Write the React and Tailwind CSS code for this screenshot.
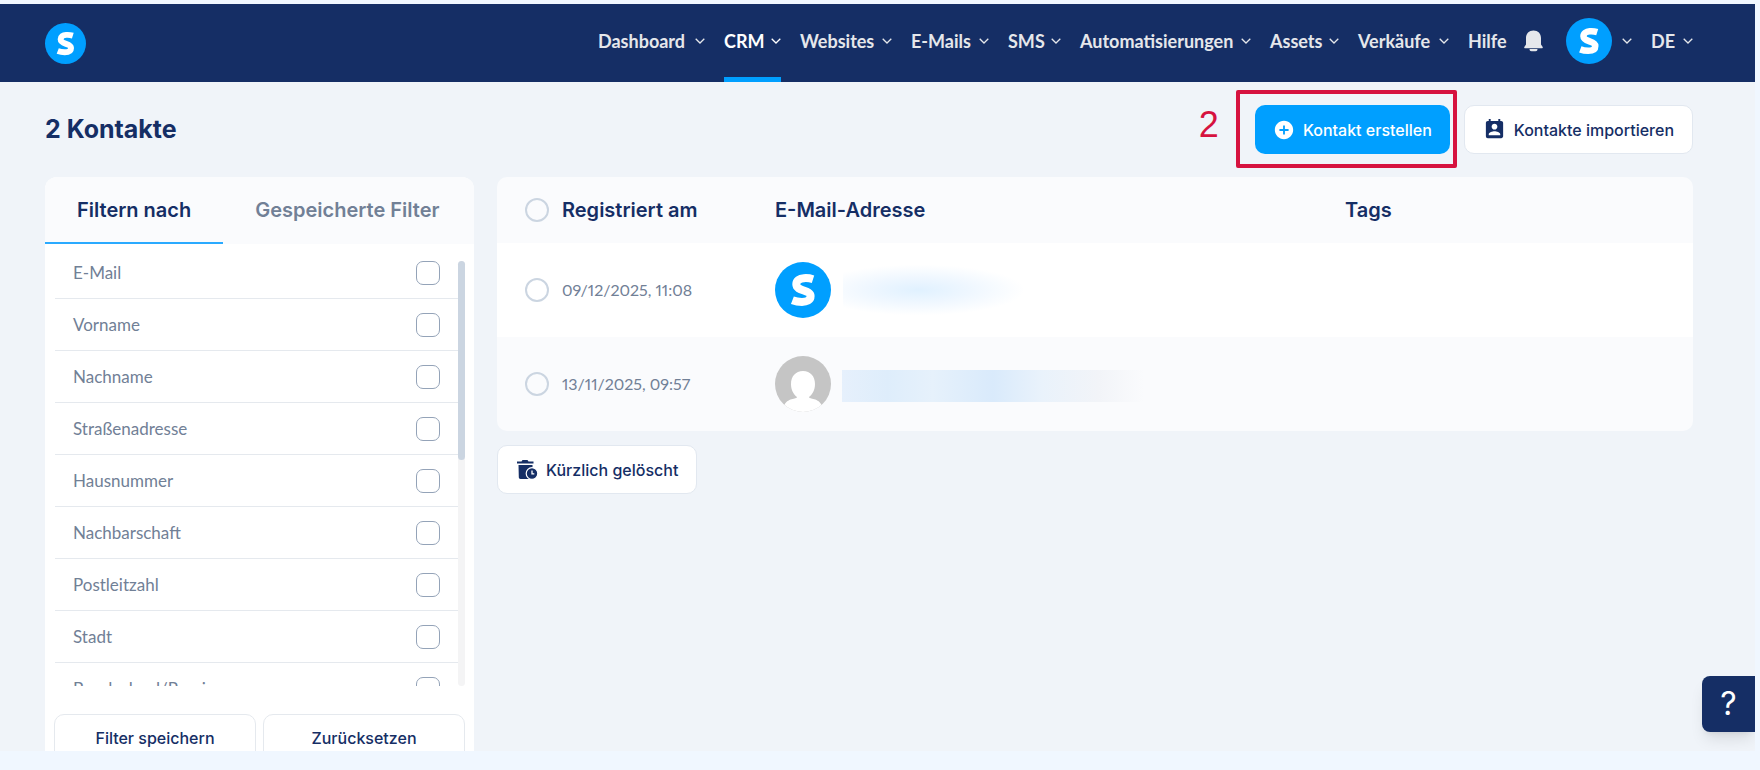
import React, { useState } from "react";
import { MdAddCircle, MdPermContactCalendar } from "react-icons/md";

const navItems = [
  { label: "Dashboard", width: "w-[107px]" },
  { label: "CRM", width: "w-[57px]", active: true },
  { label: "Websites", width: "w-[92px]" },
  { label: "E-Mails", width: "w-[78px]" },
  { label: "SMS", width: "w-[53px]" },
  { label: "Automatisierungen", width: "w-[171px]" },
  { label: "Assets", width: "w-[69px]" },
  { label: "Verkäufe", width: "w-[91px]" },
];

const filters = [
  "E-Mail",
  "Vorname",
  "Nachname",
  "Straßenadresse",
  "Hausnummer",
  "Nachbarschaft",
  "Postleitzahl",
  "Stadt",
  "Bundesland/Provinz",
];

const Chevron = () => (
  <svg viewBox="0 0 10 6" className="w-[10px] h-[6px] shrink-0" aria-hidden="true">
    <path d="M0.7 0.8 L5 5 L9.3 0.8" fill="none" stroke="currentColor" strokeWidth="1.3" />
  </svg>
);

const LogoMark = ({ className }) => (
  <svg viewBox="0 0 56 56" className={className} aria-hidden="true">
    <circle cx="28" cy="28" r="28" fill="#009fff" />
    <path
      d="M38 17.200 C34.500 16.100 31.500 16 28.800 16.200 C24.500 16.500 21.300 18.600 21.300 22.300 C21.300 29.500 35.600 27.500 35.600 34 C35.600 38.500 31.500 39.900 27 39.900 C23 39.900 20 39.200 17.400 38.200"
      fill="none"
      stroke="#fff"
      strokeWidth="8"
    />
  </svg>
);

const PersonAvatar = () => (
  <svg viewBox="0 0 56 56" className="w-14 h-14 shrink-0" aria-hidden="true">
    <defs>
      <clipPath id="avatarClip">
        <circle cx="28" cy="28" r="28" />
      </clipPath>
    </defs>
    <g clipPath="url(#avatarClip)">
      <rect width="56" height="56" fill="#c5c5c5" />
      <path
        d="M28 15 C20.500 15 16 20.500 16 28 C16 34 18.500 38.500 22 41 C22 43.500 12 41.500 9 50 L9 58 L47 58 L47 50 C44 41.500 34 43.500 34 41 C37.500 38.500 40 34 40 28 C40 20.500 35.500 15 28 15 Z"
        fill="#fff"
      />
    </g>
  </svg>
);

const TrashClock = () => (
  <svg viewBox="0 0 22 22" className="w-[22px] h-[22px]" aria-hidden="true">
    <path
      d="M1 2.500 H5.500 L6.500 1 H11.500 L12.500 2.500 H17.500 V4.500 H1 Z M2.500 6 H16.500 V20 H4.500 C3.400 20 2.900 19.300 2.800 18.300 Z"
      fill="currentColor"
    />
    <circle cx="16" cy="14.500" r="5.800" fill="currentColor" stroke="#fff" strokeWidth="1.200" />
    <path d="M16 11.500 V14.800 H18.300" fill="none" stroke="#fff" strokeWidth="1.300" />
  </svg>
);

const Header = () => (
  <header className="flex h-[78px] items-stretch justify-between bg-[#152e65] pl-[45px] pr-[62px] text-[#e5e7eb]">
    <a href="#home" aria-label="Startseite" className="flex items-center">
      <LogoMark className="w-[41px] h-[41px]" />
    </a>
    <nav className="flex gap-[19px] pb-1 font-['Lato',sans-serif] text-lg font-bold">
      {navItems.map((item) => (
        <button
          key={item.label}
          className={`relative flex items-center justify-between whitespace-nowrap ${item.width} ${
            item.active ? "text-white" : ""
          }`}
        >
          {item.label}
          <Chevron />
          {item.active && (
            <span className="absolute inset-x-0 -bottom-1 h-[5px] bg-[#009fff]" />
          )}
        </button>
      ))}
      <a href="#hilfe" className="flex items-center w-[37px]">
        Hilfe
      </a>
      <button aria-label="Benachrichtigungen" className="flex items-center">
        <svg viewBox="0 0 19 22" className="w-[19px] h-[22px]" aria-hidden="true">
          <path
            d="M9.500 0.500 C5 0.500 2 3.600 2 8 V14.500 L0.300 17 C0 17.600 0.300 18.200 0.800 18.200 H18.200 C18.700 18.200 19 17.600 18.700 17 L17 14.500 V8 C17 3.600 14 0.500 9.500 0.500 Z M5.500 18.900 H13.500 C13.500 20.800 12.500 21.300 9.500 21.300 C6.500 21.300 5.500 20.800 5.500 18.900 Z"
            fill="currentColor"
          />
        </svg>
      </button>
      <button aria-label="Konto" className="ml-1 flex items-center gap-[10px]">
        <LogoMark className="w-[46px] h-[46px]" />
        <Chevron />
      </button>
      <button className="flex w-[42px] items-center justify-between">
        DE
        <Chevron />
      </button>
    </nav>
  </header>
);

const FilterPanel = () => {
  const [tab, setTab] = useState(0);

  return (
    <aside className="w-[429px] shrink-0 overflow-hidden rounded-t-xl bg-white">
      <div className="flex h-[67px] bg-[#fafbfd] text-xl font-semibold">
        {["Filtern nach", "Gespeicherte Filter"].map((label, index) => (
          <button
            key={label}
            onClick={() => setTab(index)}
            className={`px-8 border-b-2 whitespace-nowrap ${
              index === tab
                ? "border-[#2aaaff] text-[#152e65]"
                : "border-transparent text-[#718096]"
            }`}
          >
            {label}
          </button>
        ))}
      </div>
      <div className="mt-[17px] ml-[10px] mr-[9px] flex h-[425px]">
        <ul className="flex-1 overflow-hidden">
          {filters.map((name) => (
            <li key={name} className="border-b border-[#e5e9ee] pt-[14px] pb-[13px] first:pt-0">
              <label className="flex h-6 items-center justify-between px-[18px] font-['Lato',sans-serif] text-[17px] text-[#718096]">
                {name}
                <input
                  type="checkbox"
                  className="h-6 w-6 appearance-none rounded-[7px] border border-[#94a3b8] bg-white"
                />
              </label>
            </li>
          ))}
        </ul>
        <div className="w-[7px] rounded-full bg-[#f4f4f5]">
          <div className="h-[199px] rounded-full bg-[#cbd5e1]" />
        </div>
      </div>
      <div className="mt-7 mx-[9px] grid grid-cols-2 gap-[7px]">
        {["Filter speichern", "Zurücksetzen"].map((label) => (
          <button
            key={label}
            className="h-12 rounded-[10px] border border-[#e5e9ee] text-base font-medium"
          >
            {label}
          </button>
        ))}
      </div>
    </aside>
  );
};

const RoundCheck = ({ label }) => (
  <input
    type="checkbox"
    aria-label={label}
    className="block h-6 w-6 appearance-none rounded-full border-2 border-[#cbd5e1]"
  />
);

const ContactTable = () => (
  <div className="overflow-hidden rounded-[10px]">
    <table className="w-full table-fixed text-left">
      <colgroup>
        <col className="w-[65px]" />
        <col className="w-[213px]" />
        <col className="w-[570px]" />
        <col />
      </colgroup>
      <thead>
        <tr className="h-[66px] bg-[#fafbfd] text-xl">
          <th className="pl-7">
            <RoundCheck label="Alle auswählen" />
          </th>
          <th className="font-semibold">Registriert am</th>
          <th className="font-semibold">E-Mail-Adresse</th>
          <th className="font-semibold">Tags</th>
        </tr>
      </thead>
      <tbody>
        <tr className="h-[94px] bg-white">
          <td className="pl-7">
            <RoundCheck label="Kontakt auswählen" />
          </td>
          <td className="font-['Lato',sans-serif] text-base proportional-nums text-[#718096]">
            09/12/2025, 11:08
          </td>
          <td>
            <div className="flex items-center gap-3">
              <LogoMark className="w-14 h-14 shrink-0" />
              <div className="h-[50px] w-[180px] bg-[radial-gradient(ellipse_at_42%_50%,#e0f1ff_0%,#eff7ff_35%,#fff_72%)]" />
            </div>
          </td>
          <td />
        </tr>
        <tr className="h-[94px] bg-[#fafbfd]">
          <td className="pl-7">
            <RoundCheck label="Kontakt auswählen" />
          </td>
          <td className="font-['Lato',sans-serif] text-base proportional-nums text-[#718096]">
            13/11/2025, 09:57
          </td>
          <td>
            <div className="flex items-center gap-[11px]">
              <PersonAvatar />
              <div className="mt-1 h-8 w-[302px] bg-[linear-gradient(90deg,#e6f0fc_0%,#deedfb_15%,#e6f1fb_30%,#d9eafb_50%,#e9f2fb_66%,#f2f4f8_85%,#fafbfd_100%)]" />
            </div>
          </td>
          <td />
        </tr>
      </tbody>
    </table>
  </div>
);

const App = () => {
  return (
    <div className="h-screen overflow-hidden bg-[#f0f7ff] pt-1 pr-[5px] pb-[19px] font-['Inter',sans-serif] text-[#152e65]">
      <div className="relative h-full overflow-hidden bg-[#f0f4f9]">
        <Header />
        <main className="pl-[45px] pr-[62px]">
          <div className="flex h-[95px] items-center justify-between">
            <h1 className="text-[25px] font-bold">2 Kontakte</h1>
            <div className="flex items-center gap-[14px]">
              <div className="relative">
                <button className="flex h-[49px] items-center gap-2 rounded-[10px] bg-[#009fff] px-[18px] text-base font-medium text-white">
                  <MdAddCircle className="h-[22px] w-[22px]" />
                  Kontakt erstellen
                </button>
                <div className="pointer-events-none absolute -top-[15px] -right-[7px] -bottom-[14px] -left-[19px] rounded-xs border-4 border-[#d6123f]" />
                <span className="absolute right-full top-0.5 mr-9 font-['Liberation_Sans',sans-serif] text-4xl leading-9 text-[#d6123f]">
                  2
                </span>
              </div>
              <button className="flex h-[49px] items-center gap-2 rounded-[10px] border border-[#e2e8f0] bg-white px-[18px] text-base font-medium">
                <MdPermContactCalendar className="h-[23px] w-[23px]" />
                Kontakte importieren
              </button>
            </div>
          </div>
          <div className="flex gap-[23px]">
            <FilterPanel />
            <section className="flex-1">
              <ContactTable />
              <button className="mt-[14px] flex h-[49px] items-center gap-2 rounded-[10px] border border-[#e2e8f0] bg-white px-[18px] text-base font-medium">
                <TrashClock />
                Kürzlich gelöscht
              </button>
            </section>
          </div>
        </main>
        <button
          aria-label="Hilfe öffnen"
          className="absolute right-0 bottom-[19px] h-14 w-[53px] rounded-l-lg bg-[#152e65] text-[32px] text-white shadow-lg"
        >
          ?
        </button>
      </div>
    </div>
  );
};

export default App;
